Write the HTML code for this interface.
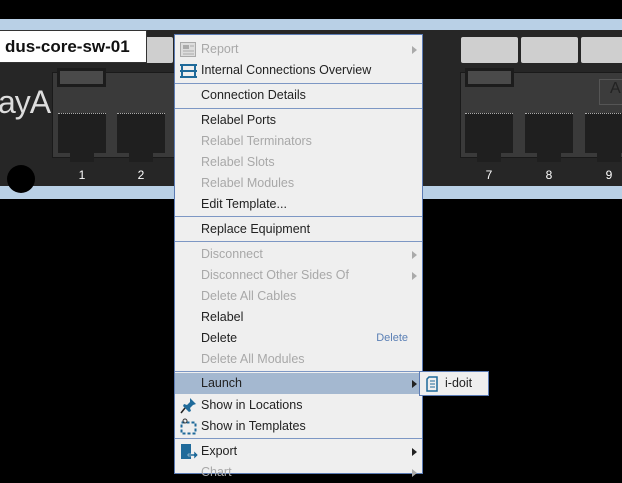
<!DOCTYPE html>
<html><head><style>
*{margin:0;padding:0;box-sizing:border-box}
body{width:622px;height:472px;background:#000;position:relative;overflow:hidden;font-family:"Liberation Sans","DejaVu Sans",sans-serif}
.a{position:absolute}
.band{left:0;width:622px;background:#b9d0e6}
.dev{left:0;top:30px;width:622px;height:156px;background:#262626}
.mod{background:#3a3a3a;border:1px solid #1a1a1a}
.lbl{background:#cfcfcf;border-radius:2px}
.led{background:#4a4a4a;border:3px solid #1c1c1c}
.port{width:48px;height:40px;background:#1f1f1f;border-top:1px dotted #aaa}
.port:after{content:"";position:absolute;left:12px;top:38px;width:24px;height:10px;background:#1f1f1f}
.num{color:#fff;font-size:12px;top:168px;width:20px;text-align:center}
.menu{left:174px;top:34px;width:249px;height:440px;background:#efefef;border:1px solid #5b7bb4}
.it{position:absolute;left:0;margin-top:1px;width:247px;height:21px;font-size:12.5px;color:#222;padding-left:26px;line-height:21px}
.dis{color:#a8a8a8}
.sep{position:absolute;left:0;margin-top:1px;width:247px;height:1px;background:#7d97c4}
.arr{position:absolute;right:5px;top:7px;width:0;height:0;border-left:5px solid #666;border-top:4px solid transparent;border-bottom:4px solid transparent}
.dis .arr{border-left-color:#aaa}
</style></head><body>
<div class="a band" style="top:19px;height:11px"></div>
<div class="a band" style="top:186px;height:13px"></div>
<div class="a dev"></div>
<div class="a" style="left:-2px;top:84px;color:#ddd;font-size:32px;letter-spacing:-1px;line-height:36px">ayA</div>
<div class="a" style="left:7px;top:165px;width:28px;height:28px;border-radius:50%;background:#000"></div>
<div class="a lbl" style="left:53px;top:37px;width:56px;height:26px"></div>
<div class="a lbl" style="left:113px;top:37px;width:60px;height:26px"></div>
<div class="a mod" style="left:52px;top:72px;width:130px;height:86px"></div>
<div class="a led" style="left:57px;top:68px;width:49px;height:19px"></div>
<div class="a port" style="left:58px;top:113px"></div>
<div class="a port" style="left:117px;top:113px"></div>
<div class="a num" style="left:72px">1</div>
<div class="a num" style="left:131px">2</div>
<div class="a lbl" style="left:461px;top:37px;width:57px;height:26px"></div>
<div class="a lbl" style="left:521px;top:37px;width:57px;height:26px"></div>
<div class="a lbl" style="left:581px;top:37px;width:45px;height:26px"></div>
<div class="a mod" style="left:460px;top:72px;width:170px;height:86px"></div>
<div class="a led" style="left:465px;top:68px;width:49px;height:19px"></div>
<div class="a" style="left:599px;top:79px;width:30px;height:26px;border:1px solid #555;background:#3c3c3c;color:#222;font-size:16px;padding-left:10px">A</div>
<div class="a port" style="left:465px;top:113px"></div>
<div class="a port" style="left:525px;top:113px"></div>
<div class="a port" style="left:585px;top:113px"></div>
<div class="a num" style="left:479px">7</div>
<div class="a num" style="left:539px">8</div>
<div class="a num" style="left:599px">9</div>
<div class="a" style="left:0;top:30px;width:147px;height:33px;background:#fff;border:1px solid #333;border-left:none;font-weight:bold;font-size:17px;line-height:31px;padding-left:5px;color:#111">dus-core-sw-01</div>

<div class="a menu">
<div class="it dis" style="top:3px"><svg class="a" style="left:5px;top:3px" width="16" height="15"><rect x="0.5" y="0.5" width="15" height="14" fill="#ddd" stroke="#aaa"/><rect x="3" y="3" width="6" height="4" fill="#aaa"/><path d="M10 4h4M3 9h11M3 12h11" stroke="#aaa"/></svg>Report<span class="arr"></span></div>
<div class="it" style="top:24px"><svg class="a" style="left:5px;top:4px" width="17" height="14"><path d="M0 1h17M0 7h17M0 13h17M2 1v12M15 1v12" stroke="#1f6a9a" stroke-width="2"/></svg>Internal Connections Overview</div>
<div class="sep" style="top:47px"></div>
<div class="it" style="top:49px">Connection Details</div>
<div class="sep" style="top:72px"></div>
<div class="it" style="top:74px">Relabel Ports</div>
<div class="it dis" style="top:95px">Relabel Terminators</div>
<div class="it dis" style="top:116px">Relabel Slots</div>
<div class="it dis" style="top:137px">Relabel Modules</div>
<div class="it" style="top:158px">Edit Template...</div>
<div class="sep" style="top:180px"></div>
<div class="it" style="top:183px">Replace Equipment</div>
<div class="sep" style="top:205px"></div>
<div class="it dis" style="top:208px">Disconnect<span class="arr"></span></div>
<div class="it dis" style="top:229px">Disconnect Other Sides Of<span class="arr"></span></div>
<div class="it dis" style="top:250px">Delete All Cables</div>
<div class="it" style="top:271px">Relabel</div>
<div class="it" style="top:292px">Delete<span class="a" style="right:14px;top:0;color:#5a7fb5;font-size:11px">Delete</span></div>
<div class="it dis" style="top:313px">Delete All Modules</div>
<div class="sep" style="top:335px"></div>
<div class="it" style="top:337px;background:#a4b8d0">Launch<span class="arr" style="border-left-color:#222"></span></div>
<div class="it" style="top:359px"><svg class="a" style="left:5px;top:2px" width="17" height="17"><path d="M10 1l6 6-3 1-3 3 1 3-2 1-6-6 1-2 3 1 3-3z" fill="#1f6a9a"/><path d="M5 11l-4 5" stroke="#222" stroke-width="1.5"/></svg>Show in Locations</div>
<div class="it" style="top:380px"><svg class="a" style="left:5px;top:2px" width="17" height="17"><rect x="1.5" y="4.5" width="14" height="11" fill="none" stroke="#1f6a9a" stroke-width="2" stroke-dasharray="3 2"/><circle cx="5" cy="3" r="2" fill="none" stroke="#333"/></svg>Show in Templates</div>
<div class="sep" style="top:402px"></div>
<div class="it" style="top:405px"><svg class="a" style="left:5px;top:2px" width="18" height="17"><rect x="1" y="1" width="10" height="15" fill="#1f6a9a"/><path d="M8 11h6v-3l4 4-4 4v-3H8z" fill="#1f6a9a" stroke="#efefef" stroke-width=".5"/></svg>Export<span class="arr" style="border-left-color:#222"></span></div>
<div class="it dis" style="top:426px">Chart<span class="arr"></span></div>
</div>
<div class="a" style="left:419px;top:371px;width:70px;height:25px;background:#efefef;border:1px solid #5b7bb4;font-size:12.5px;line-height:23px;padding-left:25px;color:#222"><svg class="a" style="left:6px;top:4px" width="12" height="16"><path d="M3 1h8v14H1V3z" fill="none" stroke="#1f6a9a" stroke-width="1.5"/><path d="M4 5h5M4 8h5M4 11h5" stroke="#1f6a9a"/></svg>i-doit</div>
</body></html>
